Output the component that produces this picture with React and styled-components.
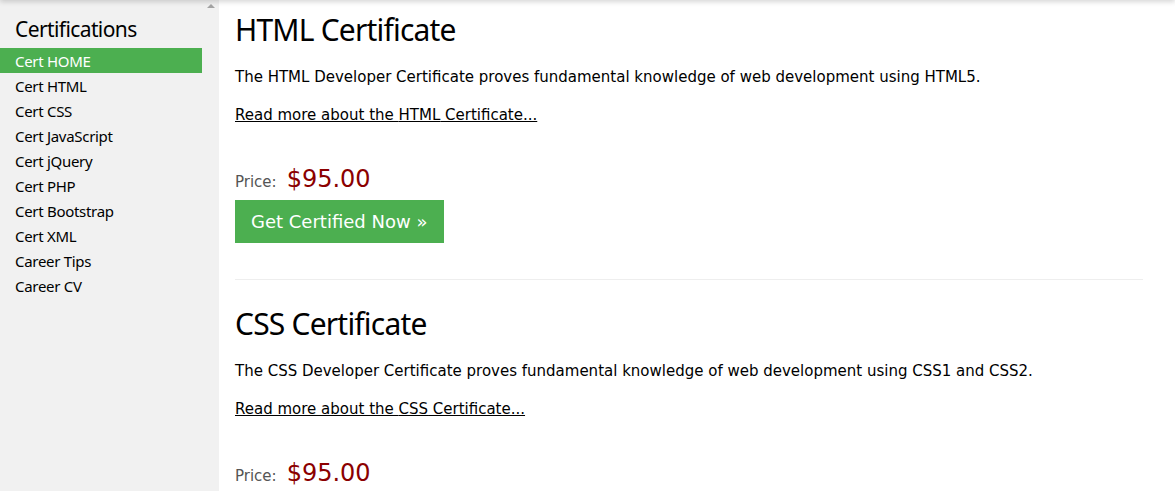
import React from "react";
import styled, { createGlobalStyle } from "styled-components";

const Global = createGlobalStyle`
  html, body { margin: 0; padding: 0; background: #fff; }
  body { font-family: "DejaVu Sans", Verdana, sans-serif; font-size: 15px; color: #000; overflow: hidden; }
  * { box-sizing: border-box; }
`;

const Page = styled.div`
  display: flex;
  height: 491px;
  position: relative;
  overflow: hidden;
`;

const TopShadow = styled.div`
  position: absolute;
  left: 0;
  right: 0;
  top: -10px;
  height: 10px;
  box-shadow: 0 2px 5px rgba(0, 0, 0, 0.16);
  z-index: 2;
`;

const Sidebar = styled.aside`
  width: 219px;
  flex: none;
  display: flex;
  background: #f1f1f1;
`;

const SideNav = styled.nav`
  flex: 1;
  display: flex;
  flex-direction: column;
  font-family: "Noto Sans", "Segoe UI", sans-serif;
`;

const SideTitle = styled.h2`
  margin: 0;
  padding: 14px 15px 3px;
  font-size: 21px;
  font-weight: 400;
  line-height: 31px;
  letter-spacing: -0.6px;
`;

const SideLink = styled.a`
  display: block;
  padding: 1px 15px 0;
  height: 25px;
  line-height: 25px;
  font-size: 15px;
  letter-spacing: -0.3px;
  color: ${(p) => (p.$active ? "#fff" : "#000")};
  background: ${(p) => (p.$active ? "#4CAF50" : "transparent")};
  text-decoration: none;
`;

const ScrollTrack = styled.div`
  width: 17px;
  flex: none;
  display: flex;
  justify-content: center;
  padding-top: 4px;
`;

const Arrow = styled.div`
  width: 0;
  height: 0;
  border-left: 4px solid transparent;
  border-right: 4px solid transparent;
  border-bottom: 4px solid #a3a3a3;
`;

const Main = styled.main`
  flex: 1;
  padding: 12px 32px 0 16px;
`;

const Section = styled.section``;

const Title = styled.h1`
  margin: 0 0 18px;
  font-family: "Noto Sans", "Segoe UI", sans-serif;
  font-size: 30px;
  font-weight: 400;
  line-height: 36px;
  letter-spacing: -0.8px;
`;

const Text = styled.p`
  margin: 0 0 15px;
  line-height: 22.5px;
`;

const MoreLink = styled.a`
  color: #000;
  text-decoration: underline;
`;

const PriceRow = styled.div`
  margin-top: 35px;
  display: flex;
  align-items: baseline;
  gap: 10px;
  line-height: 36px;
`;

const PriceLabel = styled.span`
  color: #555;
  font-size: 15px;
`;

const PriceValue = styled.span`
  color: #8b0000;
  font-size: 24px;
`;

const Button = styled.a`
  display: inline-block;
  padding: 8px 17px 8px 16px;
  height: 43px;
  background: #4caf50;
  color: #fff;
  font-size: 18px;
  line-height: 27px;
  text-decoration: none;
`;

const Rule = styled.hr`
  border: 0;
  border-top: 1px solid #eee;
  margin: 36px 0 26px;
`;

const links = [
  "Cert HOME",
  "Cert HTML",
  "Cert CSS",
  "Cert JavaScript",
  "Cert jQuery",
  "Cert PHP",
  "Cert Bootstrap",
  "Cert XML",
  "Career Tips",
  "Career CV",
];

const certs = [
  {
    name: "HTML",
    desc: "The HTML Developer Certificate proves fundamental knowledge of web development using HTML5.",
  },
  {
    name: "CSS",
    desc: "The CSS Developer Certificate proves fundamental knowledge of web development using CSS1 and CSS2.",
  },
];

export default function App() {
  return (
    <>
      <Global />
      <Page>
        <TopShadow />
        <Sidebar>
          <SideNav>
            <SideTitle>Certifications</SideTitle>
            {links.map((l, i) => (
              <SideLink key={l} href="#" $active={i === 0}>
                {l}
              </SideLink>
            ))}
          </SideNav>
          <ScrollTrack>
            <Arrow />
          </ScrollTrack>
        </Sidebar>
        <Main>
          {certs.map((c, i) => (
            <Section key={c.name}>
              <Title>{c.name} Certificate</Title>
              <Text>{c.desc}</Text>
              <Text>
                <MoreLink href="#">Read more about the {c.name} Certificate...</MoreLink>
              </Text>
              <PriceRow>
                <PriceLabel>Price:</PriceLabel>
                <PriceValue>$95.00</PriceValue>
              </PriceRow>
              <Button href="#">Get Certified Now »</Button>
              {i === 0 && <Rule />}
            </Section>
          ))}
        </Main>
      </Page>
    </>
  );
}
